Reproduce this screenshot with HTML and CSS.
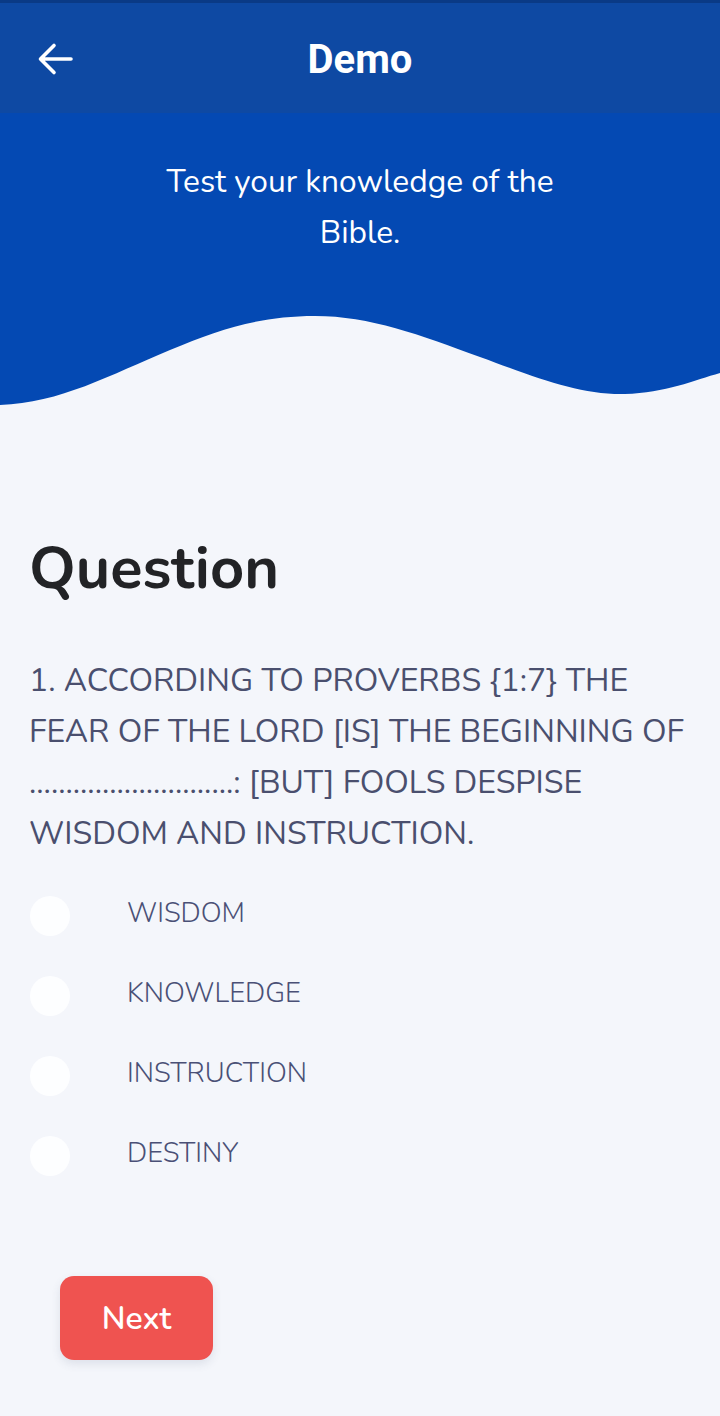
FILE: index.html
```html
<!DOCTYPE html>
<html>
<head>
<meta charset="utf-8">
<link rel="stylesheet" href="styles.css">
</head>
<body>
<div class="page">
  <header class="appbar">
    <svg class="back" viewBox="0 0 36 34" width="36" height="34"><path d="M34 17H4M17 3.5L3.5 17L17 30.5" fill="none" stroke="#fff" stroke-width="3.6" stroke-linecap="round" stroke-linejoin="round"/></svg>
    <h1 class="title">Demo</h1>
  </header>
  <section class="hero">
    <p class="hero-text">Test your knowledge of the Bible.</p>
    <svg class="wave" viewBox="0 0 720 92" preserveAspectRatio="none"><path d="M0,90 C60,88 110,60 170,35 C220,14 260,1 315,1 C370,1 420,20 480,42 C540,64 580,80 625,79 C665,78 695,65 720,58 L720,92 L0,92 Z" fill="#f4f6fb"/></svg>
  </section>
  <main class="content">
    <h2 class="heading">Question</h2>
    <p class="question">1. ACCORDING TO PROVERBS {1:7} THE FEAR OF THE LORD [IS] THE BEGINNING OF ............................: [BUT] FOOLS DESPISE WISDOM AND INSTRUCTION.</p>
    <ul class="options">
      <li class="option"><span class="radio"></span><span class="label">WISDOM</span></li>
      <li class="option"><span class="radio"></span><span class="label">KNOWLEDGE</span></li>
      <li class="option"><span class="radio"></span><span class="label">INSTRUCTION</span></li>
      <li class="option"><span class="radio"></span><span class="label">DESTINY</span></li>
    </ul>
    <button class="next">Next</button>
  </main>
</div>
</body>
</html>
```
FILE: styles.css
```css
* { box-sizing: border-box; }
html, body { margin: 0; padding: 0; }
body { background: #f4f6fb; width: 720px; height: 1416px; overflow: hidden; }
.page { display: flex; flex-direction: column; }
.appbar {
  height: 113px;
  background: #0e49a3;
  border-top: 3px solid #0a3a86;
  display: flex;
  align-items: center;
  position: relative;
}
.back { position: absolute; left: 37px; top: 39px; }
.title {
  margin: 0; width: 100%; text-align: center;
  font-family: Roboto, sans-serif; font-weight: 700; font-size: 40px; color: #fff;
  padding-top: 2px;
}
.hero {
  background: #0449b3;
  height: 294px;
  display: flex; flex-direction: column; align-items: center;
  position: relative;
}
.hero-text {
  margin: 0; padding-top: 43px;
  width: 420px; text-align: center;
  font-family: Nunito, Lato, sans-serif; font-size: 31.7px; line-height: 51px; color: #fff;
}
.wave { position: absolute; left: 0; bottom: 0; width: 720px; height: 92px; display: block; }
.content { padding: 122px 28px 0 29px; }
.heading {
  margin: 0; font-family: Nunito, sans-serif; font-weight: 700; font-size: 59.5px; line-height: 80px;
  color: #222326;
}
.question {
  margin: 46px 0 0; font-family: Nunito, sans-serif; font-weight: 400; font-size: 32px; line-height: 51px;
  color: #4a4f6e;
}
.options { list-style: none; margin: 37px 0 0; padding: 0; display: flex; flex-direction: column; gap: 40px; }
.option { display: flex; align-items: center; height: 40px; }
.radio { width: 40px; height: 40px; border-radius: 50%; background: #fdfeff; flex: none; margin-left: 1px; }
.label { margin-left: 57px; padding-bottom: 6px; font-family: Nunito, sans-serif; font-weight: 300; font-size: 27.5px; color: #4a5076; }
.next {
  margin: 100px 0 0 31px; width: 153px; height: 84px; border: none; border-radius: 14px;
  background: #ef5350; color: #fff; font-family: Nunito, sans-serif; font-size: 32px; font-weight: 600;
  box-shadow: 0 4px 10px rgba(60, 70, 110, 0.12);
}
```
